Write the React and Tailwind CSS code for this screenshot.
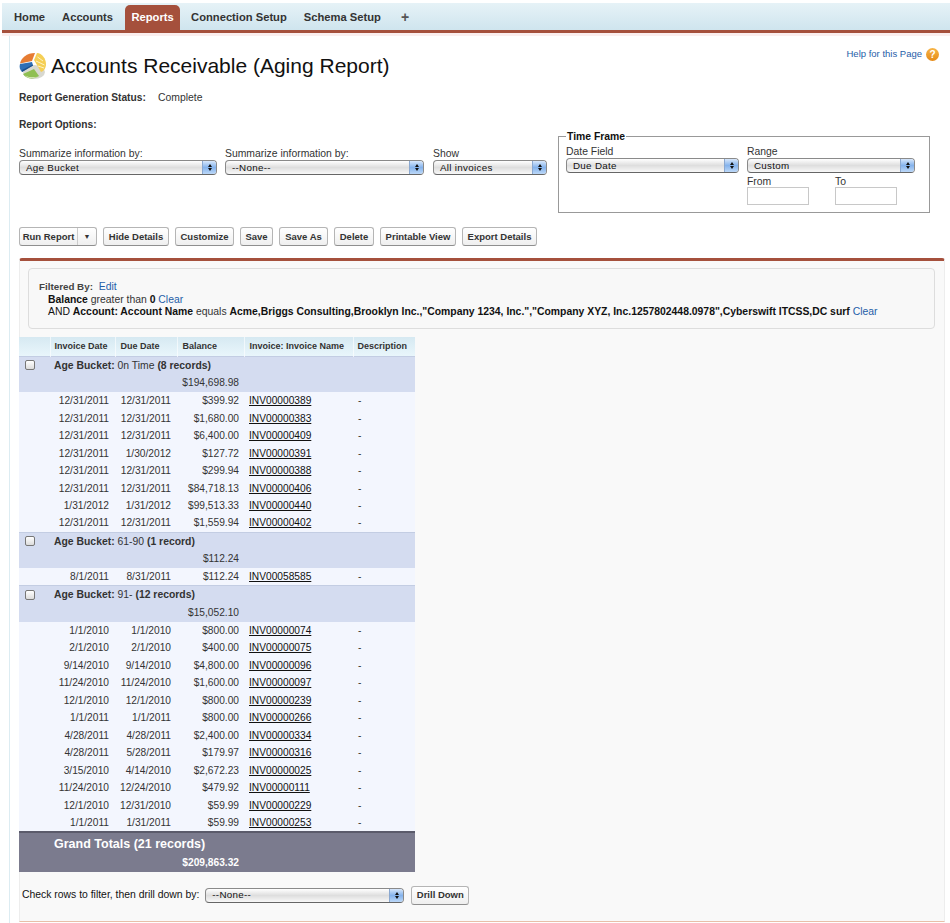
import React from 'react';

const TABS = ['Home', 'Accounts', 'Reports', 'Connection Setup', 'Schema Setup'];

const BUTTONS = [
  { label: 'Hide Details', width: 'w-[66px]' },
  { label: 'Customize', width: 'w-[59px]' },
  { label: 'Save', width: 'w-[33px]' },
  { label: 'Save As', width: 'w-[49px]' },
  { label: 'Delete', width: 'w-[40px]' },
  { label: 'Printable View', width: 'w-[76px]' },
  { label: 'Export Details', width: 'w-[75px]' },
];

const GROUPS = [
  {
    name: '0n Time',
    count: '(8 records)',
    total: '$194,698.98',
    rows: [
      ['12/31/2011', '12/31/2011', '$399.92', 'INV00000389'],
      ['12/31/2011', '12/31/2011', '$1,680.00', 'INV00000383'],
      ['12/31/2011', '12/31/2011', '$6,400.00', 'INV00000409'],
      ['12/31/2011', '1/30/2012', '$127.72', 'INV00000391'],
      ['12/31/2011', '12/31/2011', '$299.94', 'INV00000388'],
      ['12/31/2011', '12/31/2011', '$84,718.13', 'INV00000406'],
      ['1/31/2012', '1/31/2012', '$99,513.33', 'INV00000440'],
      ['12/31/2011', '12/31/2011', '$1,559.94', 'INV00000402'],
    ],
  },
  {
    name: '61-90',
    count: '(1 record)',
    total: '$112.24',
    rows: [['8/1/2011', '8/31/2011', '$112.24', 'INV00058585']],
  },
  {
    name: '91-',
    count: '(12 records)',
    total: '$15,052.10',
    rows: [
      ['1/1/2010', '1/1/2010', '$800.00', 'INV00000074'],
      ['2/1/2010', '2/1/2010', '$400.00', 'INV00000075'],
      ['9/14/2010', '9/14/2010', '$4,800.00', 'INV00000096'],
      ['11/24/2010', '11/24/2010', '$1,600.00', 'INV00000097'],
      ['12/1/2010', '12/1/2010', '$800.00', 'INV00000239'],
      ['1/1/2011', '1/1/2011', '$800.00', 'INV00000266'],
      ['4/28/2011', '4/28/2011', '$2,400.00', 'INV00000334'],
      ['4/28/2011', '5/28/2011', '$179.97', 'INV00000316'],
      ['3/15/2010', '4/14/2010', '$2,672.23', 'INV00000025'],
      ['11/24/2010', '12/24/2010', '$479.92', 'INV00000111'],
      ['12/1/2010', '12/31/2010', '$59.99', 'INV00000229'],
      ['1/1/2011', '1/31/2011', '$59.99', 'INV00000253'],
    ],
  },
];

function MacSelect({ value, width }) {
  return (
    <div className={`${width} h-[15px] flex items-center justify-between rounded-[4px] border border-[#8a8a8a] border-b-[#666] bg-[linear-gradient(#ffffff,#dedede_50%,#f8f8f8)] overflow-hidden`}>
      <span className="pl-[6px] text-[9.8px] tracking-[0.3px] text-[#111] leading-none">{value}</span>
      <span className="w-[14px] h-full flex flex-col items-center justify-center gap-[1px] bg-[linear-gradient(#d7e7fb,#85b3ec_50%,#bcd8f8)] border-l border-[#8aa8d0]">
        <span className="w-0 h-0 border-x-[2.5px] border-x-transparent border-b-[3px] border-b-[#111]" />
        <span className="w-0 h-0 border-x-[2.5px] border-x-transparent border-t-[3px] border-t-[#111]" />
      </span>
    </div>
  );
}

function Btn({ children, className }) {
  return (
    <button className={`${className} h-[19px] flex items-center justify-center rounded-[3px] border border-[#b5b5b5] border-b-[#8f8f8f] bg-[linear-gradient(#ffffff,#efefef)] text-[9.5px] font-bold text-[#333] leading-none`}>
      {children}
    </button>
  );
}

function PieIcon() {
  return (
    <svg width="28" height="28" viewBox="0 0 28 28">
      <ellipse cx="15" cy="20" rx="11" ry="7" fill="#d8d8d0" />
      <path d="M13 9 L1 11.5 C2 6 8 1 16 1 Z" fill="#e67c33" />
      <path d="M13 10 L1 12 C0 15 1 18 3 20 L14 13.5 Z" fill="#2f6fb5" />
      <path d="M3 18 L14 12.5 L14 13.5 L3 20 Z" fill="#1d4f8c" />
      <path d="M15 17 L4 22 C7 27 15 28 20 24 Z" fill="#8fbf52" />
      <path d="M6 23.5 C9 26.5 15 27 19 24.5 C15 26 10 25.5 6 23.5 Z" fill="#e6f0d0" />
      <path d="M15 8 L18 1 C23 1 27 7 27 12 C27 16 25 19 22 20 Z" fill="#f5cf55" />
      <path d="M18.5 5 L24 9 M17 9 L25.5 13 M19 14 L25 16" stroke="#fdf3c4" strokeWidth="1" fill="none" />
    </svg>
  );
}

function HelpIcon() {
  return (
    <span className="w-[13px] h-[13px] rounded-full bg-[linear-gradient(#f7b548,#e58a16)] flex items-center justify-center text-[10px] font-bold text-white leading-none">?</span>
  );
}

function Checkbox() {
  return <span className="block w-[10px] h-[10px] rounded-[2px] border border-[#777] bg-[linear-gradient(#ffffff,#dcdcdc)]" />;
}

function GroupRows({ group }) {
  return (
    <>
      <tr className="h-[18px] bg-[#d4dcf0] border-t border-[#c3cde3]">
        <td className="pl-[6px]"><Checkbox /></td>
        <td colSpan={5} className="pl-[4px] pt-[1px] text-[10.4px] text-[#333] whitespace-nowrap">
          <b>Age Bucket:</b> {group.name} <b>{group.count}</b>
        </td>
      </tr>
      <tr className="h-[18px] bg-[#d4dcf0]">
        <td colSpan={3} />
        <td className="pr-[5px] text-right text-[#333]">{group.total}</td>
        <td colSpan={2} />
      </tr>
      {group.rows.map((row) => (
        <tr key={row[3]} className="h-[17.5px] bg-[#f3f6fe] text-[#333]">
          <td />
          <td className="pr-[6px] text-right whitespace-nowrap">{row[0]}</td>
          <td className="pr-[6px] text-right whitespace-nowrap">{row[1]}</td>
          <td className="pr-[5px] text-right">{row[2]}</td>
          <td className="pl-[5px]"><span className="underline text-[#111]">{row[3]}</span></td>
          <td className="pl-[5px]">-</td>
        </tr>
      ))}
    </>
  );
}

export default function App() {
  return (
    <div className="w-[950px] h-[923px] overflow-hidden bg-white pt-[3px] text-[10.4px] text-[#333] [font-family:'Liberation_Sans',Arial,sans-serif]">
      {/* Tabs */}
      <div className="h-[27px] ml-[2px] flex items-end pl-[7px] bg-[linear-gradient(#e6f2f7,#cfe5ee)]">
        {TABS.map((tab) =>
          tab === 'Reports' ? (
            <div key={tab} className="h-[25px] w-[55px] mr-[6px] flex items-center justify-center rounded-t-[5px] bg-[#a5503c] text-[11.2px] font-bold text-white">
              {tab}
            </div>
          ) : (
            <div key={tab} className="h-[25px] px-[5px] mr-[7px] flex items-center text-[11.2px] font-bold text-[#333]">
              {tab}
            </div>
          )
        )}
        <div className="h-[25px] ml-[8px] flex items-center text-[14px] font-bold text-[#555]">+</div>
      </div>
      <div className="h-[3px] ml-[2px] bg-[#a5503c]" />
      <div className="h-[3px] ml-[2px] bg-[#fbeeee]" />

      {/* Page body */}
      <div className="ml-[9px] h-[887px] border-l border-[#dcecf2] pl-[9px] pr-[5px]">
        <div className="flex justify-between">
          <div className="h-[52px] pt-[6px] flex items-center gap-[4px]">
            <span className="mt-[1px]"><PieIcon /></span>
            <h1 className="text-[21px] leading-none text-[#111]">Accounts Receivable (Aging Report)</h1>
          </div>
          <div className="mt-[12px] mr-[6px] h-[13px] flex items-center gap-[4px] text-[9.5px] text-[#1f5ea8]">
            Help for this Page <HelpIcon />
          </div>
        </div>

        <div className="mt-[3px] h-[13px] flex items-center">
          <b className="w-[139px] text-[10.2px]">Report Generation Status:</b>
          <span>Complete</span>
        </div>
        <div className="mt-[14px] h-[13px] flex items-center text-[10.2px] font-bold">Report Options:</div>

        {/* Options */}
        <div className="flex h-[92px]">
          <div className="w-[206px] pt-[17px]">
            <div className="h-[12px] leading-[12px]">Summarize information by:</div>
            <MacSelect value="Age Bucket" width="w-[198px]" />
          </div>
          <div className="w-[208px] pt-[17px]">
            <div className="h-[12px] leading-[12px]">Summarize information by:</div>
            <MacSelect value="--None--" width="w-[199px]" />
          </div>
          <div className="w-[125px] pt-[17px]">
            <div className="h-[12px] leading-[12px]">Show</div>
            <MacSelect value="All invoices" width="w-[114px]" />
          </div>
          <fieldset className="w-[372px] h-[83px] -mt-[1px] border border-[#999] pl-[7px] pt-[3px]">
            <legend className="px-[1px] font-bold text-[#111] leading-[13px]">Time Frame</legend>
            <div className="flex">
              <div className="w-[181px]">
                <div className="h-[12px] leading-[12px]">Date Field</div>
                <MacSelect value="Due Date" width="w-[173px]" />
              </div>
              <div>
                <div className="h-[12px] leading-[12px]">Range</div>
                <MacSelect value="Custom" width="w-[168px]" />
                <div className="flex mt-[3px]">
                  <div className="w-[88px]">
                    <div className="h-[11px] leading-[11px]">From</div>
                    <div className="w-[62px] h-[18px] border border-[#c8c8c8] bg-white" />
                  </div>
                  <div>
                    <div className="h-[11px] leading-[11px]">To</div>
                    <div className="w-[62px] h-[18px] border border-[#c8c8c8] bg-white" />
                  </div>
                </div>
              </div>
            </div>
          </fieldset>
        </div>

        {/* Buttons */}
        <div className="mt-[4px] flex gap-[6px]">
          <div className="w-[78px] h-[19px] flex rounded-[3px] border border-[#b5b5b5] border-b-[#8f8f8f] bg-[linear-gradient(#ffffff,#efefef)] text-[9.5px] font-bold text-[#333] leading-none">
            <span className="w-[58px] flex items-center justify-center border-r border-[#ccc]">Run Report</span>
            <span className="flex-1 flex items-center justify-center text-[7px]">▼</span>
          </div>
          {BUTTONS.map((b) => (
            <Btn key={b.label} className={b.width}>{b.label}</Btn>
          ))}
        </div>

        {/* Results panel */}
        <div className="mt-[12px] w-[926px] h-[664px] rounded-t-[3px] border-t-[3px] border-t-[#a5503c] border-b border-b-[#e8bfa8] border-x border-x-[#ededed] bg-[#f9f9f9]">
          <div className="ml-[8px] mr-[9px] mt-[7px] h-[61px] rounded-[4px] border border-[#ddd] bg-[#f8f8f8] pl-[10px] pt-[12px] leading-[12.5px]">
            <div><b className="text-[#444] text-[9.8px]">Filtered By:</b> <span className="ml-[3px] text-[#1f5ea8]">Edit</span></div>
            <div className="pl-[9px] text-[#111]"><b>Balance</b> <span className="text-[#333]">greater than</span> <b>0</b> <span className="text-[#1f5ea8]">Clear</span></div>
            <div className="pl-[9px] text-[#111] whitespace-nowrap">AND <b>Account: Account Name</b> <span className="text-[#333]">equals</span> <b>Acme,Briggs Consulting,Brooklyn Inc.,"Company 1234, Inc.","Company XYZ, Inc.1257802448.0978",Cyberswift ITCSS,DC surf</b> <span className="text-[#1f5ea8]">Clear</span></div>
          </div>

          <table className="mt-[8px] -ml-[1px] w-[396px] table-fixed border-collapse text-[10.2px]">
            <colgroup>
              <col className="w-[31px]" />
              <col className="w-[65px]" />
              <col className="w-[62px]" />
              <col className="w-[67px]" />
              <col className="w-[109px]" />
              <col className="w-[62px]" />
            </colgroup>
            <thead>
              <tr className="h-[19px] bg-[linear-gradient(#d6e9f2,#e9f6fb)] text-[9px] font-bold text-[#333]">
                <th />
                <th className="pl-[4px] text-left font-bold border-l border-white/60 whitespace-nowrap">Invoice Date</th>
                <th className="pl-[5px] text-left font-bold border-l border-white/60 whitespace-nowrap">Due Date</th>
                <th className="pl-[5px] text-left font-bold border-l border-white/60">Balance</th>
                <th className="pl-[5px] text-left font-bold border-l border-white/60 whitespace-nowrap">Invoice: Invoice Name</th>
                <th className="pl-[4px] text-left font-bold border-l border-white/60">Description</th>
              </tr>
            </thead>
            <tbody>
              {GROUPS.map((group) => (
                <GroupRows key={group.name} group={group} />
              ))}
              <tr className="h-[23px] bg-[#7b7b8e] border-t-2 border-[#5b5b6b] text-white">
                <td />
                <td colSpan={5} className="pl-[4px] pt-[1px] text-[12.5px] font-bold whitespace-nowrap">Grand Totals (21 records)</td>
              </tr>
              <tr className="h-[17px] bg-[#7b7b8e] text-white">
                <td colSpan={3} />
                <td className="pr-[5px] text-right font-bold">$209,863.32</td>
                <td colSpan={2} />
              </tr>
            </tbody>
          </table>

          <div className="mt-[14px] ml-[2px] flex items-center">
            <span className="text-[#111] whitespace-nowrap">Check rows to filter, then drill down by:</span>
            <span className="ml-[6px]"><MacSelect value="--None--" width="w-[199px]" /></span>
            <Btn className="ml-[7px] w-[58px]">Drill Down</Btn>
          </div>
        </div>
      </div>
    </div>
  );
}
